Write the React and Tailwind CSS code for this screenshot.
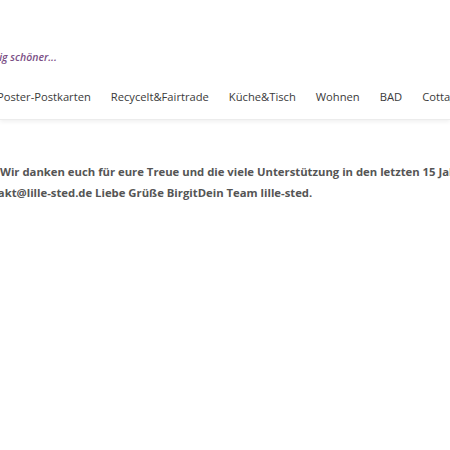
export default function App() {
  const nav = ['Poster-Postkarten', 'Recycelt&Fairtrade', 'Küche&Tisch', 'Wohnen', 'BAD', 'Cottage'];

  return (
    <div className="w-[450px] h-[450px] overflow-hidden bg-white font-['Open_Sans',sans-serif]">
      <header className="h-[120px] border-b border-[#ececec] shadow-[0_2px_4px_rgba(0,0,0,0.06)] overflow-hidden">
        <div className="pt-[50px] ml-[-23px] whitespace-nowrap">
          <p className="text-[10.5px] leading-[14px] italic font-semibold text-[#7b4f86]">richtig schöner...</p>
        </div>
        <nav className="mt-[24px] ml-[-3px] flex gap-[20px] whitespace-nowrap text-[11.2px] leading-[18px] text-[#3a3a3a]">
          {nav.map(item => (
            <a key={item} href="#" className="shrink-0">{item}</a>
          ))}
        </nav>
      </header>

      <main className="pt-[41px] text-[11.3px] leading-[21px] font-bold text-[#555] whitespace-nowrap">
        <p>Wir danken euch für eure Treue und die viele Unterstützung in den letzten 15 Jahren.</p>
        <p className="ml-[-29px]">Kontakt@lille-sted.de Liebe Grüße BirgitDein Team lille-sted.</p>
      </main>
    </div>
  );
}
